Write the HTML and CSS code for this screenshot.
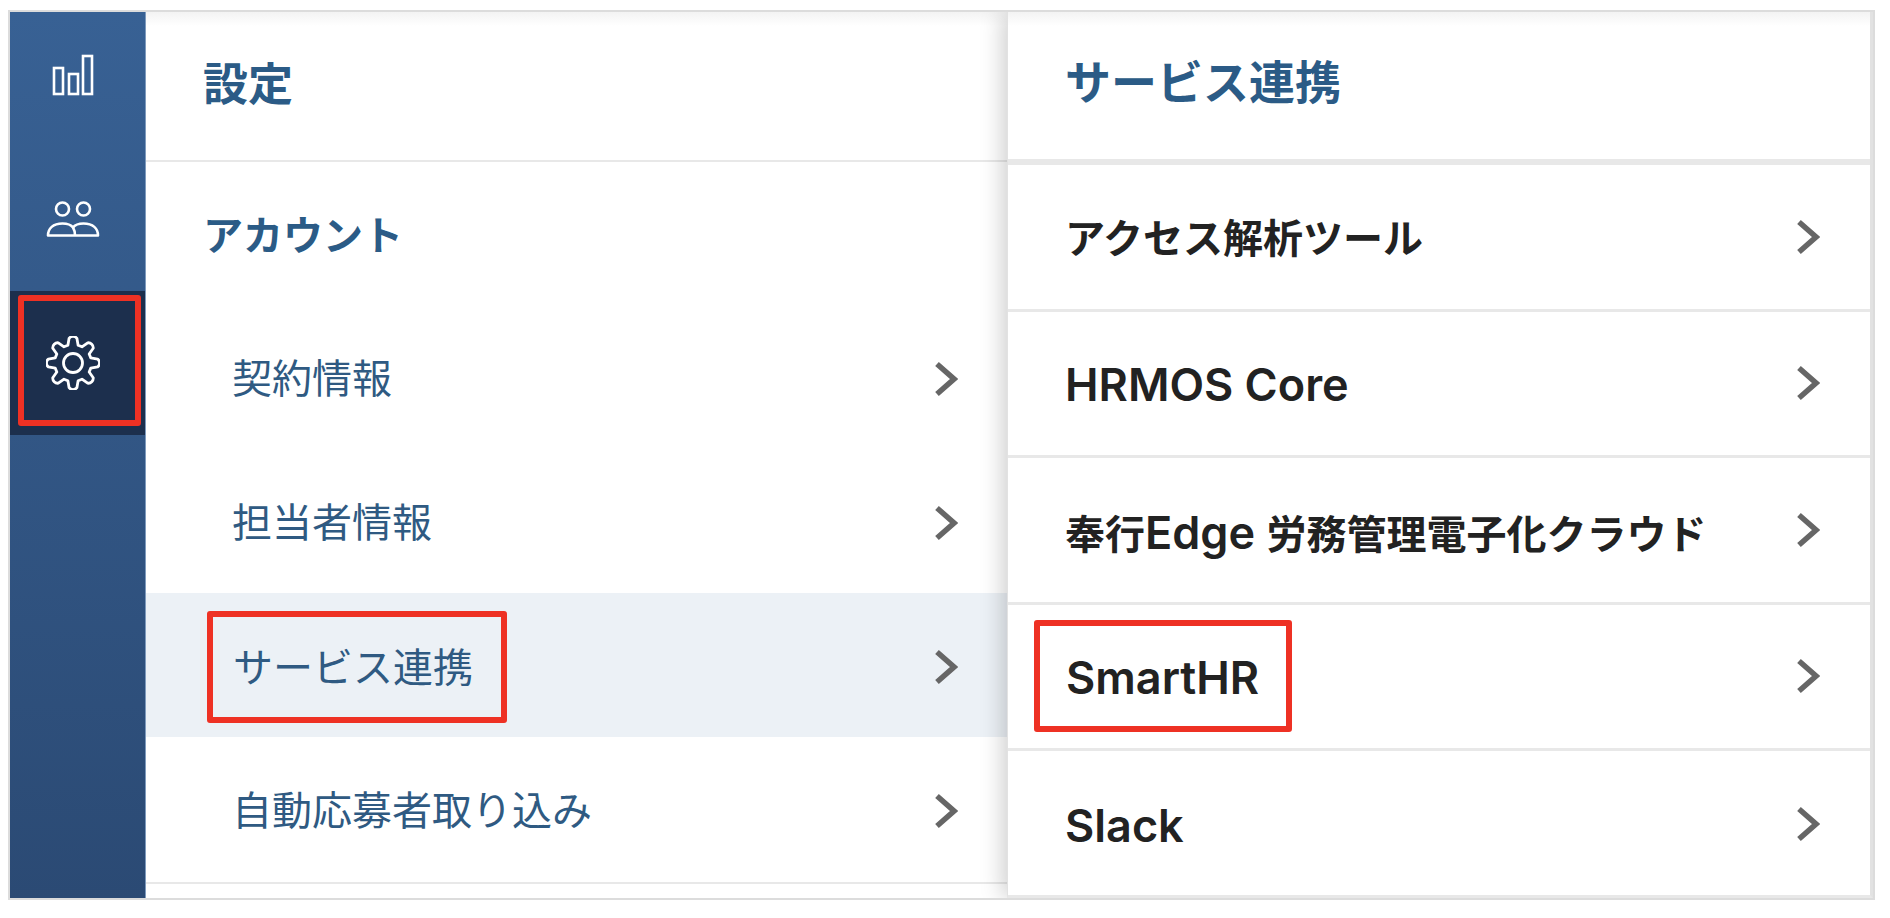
FILE: index.html
```html
<!DOCTYPE html>
<html lang="ja">
<head>
<meta charset="utf-8">
<title>設定 - サービス連携</title>
<link rel="stylesheet" href="styles.css">
</head>
<body>
<div class="frame">
  <nav class="sidebar">
    <div class="nav-item nav-item--first">
      <svg class="icon" width="42" height="42" viewBox="0 0 42 42" fill="none" stroke="#fff" stroke-width="2.600"><rect x="2" y="14" width="9" height="26"/><rect x="17" y="20" width="9" height="20"/><rect x="31" y="2" width="9" height="38"/></svg>
    </div>
    <div class="nav-item">
      <svg class="icon" width="54" height="36" viewBox="0 0 54 36" fill="none" stroke="#fff" stroke-width="2.600" stroke-linejoin="round"><circle cx="16.500" cy="8" r="6.500"/><circle cx="37.500" cy="8" r="6.500"/><path d="M2 34.500c0-7 5-12 14.500-12 5 0 8.500 1.300 10.500 4 2-2.700 5.500-4 10.500-4 9.500 0 14.500 5 14.500 12z"/><path d="M27 26.500c1.500 2.500 2 5 2 8"/></svg>
    </div>
    <div class="nav-item nav-item--active">
      <div class="nav-mark">
        <svg class="icon" width="54" height="54" viewBox="0 0 54 54" fill="none" stroke="#fff" stroke-width="2.800" stroke-linejoin="round"><circle cx="27" cy="27" r="9.500"/><path d="M23.090 2.310A5 5 0 0 1 30.910 2.310L32.100 9.220 35.970 10.820 41.700 6.770A5 5 0 0 1 47.230 12.300L43.180 18.030 44.780 21.900 51.690 23.090A5 5 0 0 1 51.690 30.910L44.780 32.100 43.180 35.970 47.230 41.700A5 5 0 0 1 41.700 47.230L35.970 43.180 32.100 44.780 30.910 51.690A5 5 0 0 1 23.090 51.690L21.900 44.780 18.030 43.180 12.300 47.230A5 5 0 0 1 6.770 41.700L10.820 35.970 9.220 32.100 2.310 30.910A5 5 0 0 1 2.310 23.090L9.220 21.900 10.820 18.030 6.770 12.300A5 5 0 0 1 12.300 6.770L18.030 10.820 21.900 9.220z"/></svg>
      </div>
    </div>
  </nav>

  <section class="panel panel--left">
    <header class="panel-head"><h1 class="panel-title">設定</h1></header>
    <h2 class="section-title">アカウント</h2>
    <ul class="menu">
      <li class="menu-row"><span class="menu-label">契約情報</span><svg class="chev" width="24" height="36" viewBox="0 0 24 36"><path d="M3 3l17 15L3 33"/></svg></li>
      <li class="menu-row"><span class="menu-label">担当者情報</span><svg class="chev" width="24" height="36" viewBox="0 0 24 36"><path d="M3 3l17 15L3 33"/></svg></li>
      <li class="menu-row menu-row--active"><span class="menu-label menu-label--marked">サービス連携</span><svg class="chev" width="24" height="36" viewBox="0 0 24 36"><path d="M3 3l17 15L3 33"/></svg></li>
      <li class="menu-row"><span class="menu-label">自動応募者取り込み</span><svg class="chev" width="24" height="36" viewBox="0 0 24 36"><path d="M3 3l17 15L3 33"/></svg></li>
    </ul>
  </section>

  <section class="panel panel--right">
    <header class="panel-head panel-head--right"><h1 class="panel-title panel-title--wide">サービス連携</h1></header>
    <ul class="list">
      <li class="list-row"><span class="list-label">アクセス解析ツール</span><svg class="chev" width="24" height="36" viewBox="0 0 24 36"><path d="M3 3l17 15L3 33"/></svg></li>
      <li class="list-row"><span class="list-label list-label--latin"><span class="latin">HRMOS Core</span></span><svg class="chev" width="24" height="36" viewBox="0 0 24 36"><path d="M3 3l17 15L3 33"/></svg></li>
      <li class="list-row"><span class="list-label">奉行<span class="latin">Edge </span>労務管理電子化クラウド</span><svg class="chev" width="24" height="36" viewBox="0 0 24 36"><path d="M3 3l17 15L3 33"/></svg></li>
      <li class="list-row"><span class="list-label list-label--marked"><span class="latin">SmartHR</span></span><svg class="chev" width="24" height="36" viewBox="0 0 24 36"><path d="M3 3l17 15L3 33"/></svg></li>
      <li class="list-row"><span class="list-label list-label--latin"><span class="latin">Slack</span></span><svg class="chev" width="24" height="36" viewBox="0 0 24 36"><path d="M3 3l17 15L3 33"/></svg></li>
    </ul>
  </section>
</div>
</body>
</html>
```

FILE: styles.css
```css
* { box-sizing: border-box; }
html, body { height: 100%; }
body {
  margin: 0;
  padding: 10px 15px 18px 8px;
  background: #fff;
  font-family: "Liberation Sans", "Noto Sans CJK JP", sans-serif;
  overflow: hidden;
}
ul { list-style: none; margin: 0; padding: 0; }
h1, h2 { margin: 0; }

.frame {
  display: flex;
  height: 890px;
  border: 2px solid #dcdcdc;
  overflow: hidden;
  background: #fff;
}

/* sidebar */
.sidebar {
  flex: 0 0 136px;
  background: linear-gradient(#386194, #2b4a74);
  border-right: 1px solid #7f9bbd;
}
.nav-item {
  height: 144px;
  display: flex;
  align-items: center;
  justify-content: center;
  padding-right: 9px;
}
.nav-item--first { height: 135px; padding-bottom: 9px; padding-top: 0; }
.nav-item--active {
  background: #1c2f4d;
  padding: 4px 4px 9px 8px;
}
.nav-mark {
  flex: 1;
  height: 100%;
  display: flex;
  align-items: center;
  justify-content: center;
  border: 6px solid #ee3124;
  border-radius: 3px;
  padding: 5px 13px 0 0;
}

/* panels */
.panel { display: flex; flex-direction: column; background: #fff; }
.panel--left { flex: 0 0 861px; }
.panel--right {
  flex: 1;
  position: relative;
  box-shadow: -4px 0 22px rgba(0, 0, 0, .2);
  border-left: 1px solid #e2e2e2;
  border-right: 3px solid #e2e2e2;
  border-bottom: 3px solid #e8e8e8;
}
.panel-head {
  height: 150px;
  flex: none;
  display: flex;
  align-items: center;
  padding: 0 0 1px 57px;
  border-bottom: 2px solid #e8e8e8;
  background: linear-gradient(#f3f3f3, #fff 14px);
}
.panel-head--right { height: 153px; padding: 0 0 6px 57px; border-bottom: 6px solid #e8e8e8; }
.panel-title { font-size: 45px; font-weight: 700; color: #2b5b86; line-height: 1; }
.panel-title--wide { font-size: 46px; }

.section-title {
  height: 143px;
  display: flex;
  align-items: center;
  padding: 0 0 1px 57px;
  font-size: 40px;
  font-weight: 700;
  color: #2b5b86;
}

/* left menu */
.menu { padding-bottom: 1px; border-bottom: 2px solid #e8e8e8; }
.menu-row {
  height: 144px;
  display: flex;
  align-items: center;
  justify-content: space-between;
  padding: 4px 49px 0 86px;
}
.menu-row--active { background: #ecf1f6; }
.menu-label { font-size: 40px; color: #2f5a82; line-height: 1; }
.menu-label--marked {
  display: flex;
  align-items: center;
  height: 112px;
  margin-left: -25px;
  padding: 2px 28px 0 20px;
  border: 6px solid #ee3124;
  border-radius: 3px;
}

/* right list */
.list { flex: 1; }
.list-row {
  height: 146.500px;
  display: flex;
  align-items: center;
  justify-content: space-between;
  padding: 0 50px 0 57px;
  border-bottom: 3px solid #e8e8e8;
}
.list-row:last-child { border-bottom: 0; }
.list-label { font-size: 40px; font-weight: 700; color: #222; line-height: 1; padding-top: 5px; }
.list-label--latin { padding-top: 3px; }
.latin { font-family: Inter, "Liberation Sans", sans-serif; font-size: 45px; font-weight: 600; }
.list-label--marked {
  display: flex;
  align-items: center;
  height: 112px;
  margin-left: -31px;
  padding: 3px 27px 0 26px;
  border: 6px solid #ee3124;
  border-radius: 3px;
}

.chev { flex: none; fill: none; stroke: #666; stroke-width: 5.500; }
```
